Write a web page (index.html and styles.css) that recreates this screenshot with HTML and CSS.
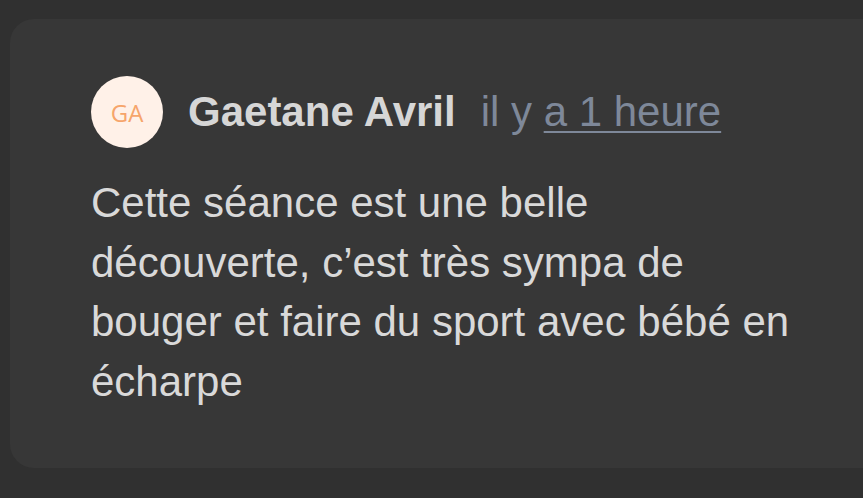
FILE: index.html
```html
<!DOCTYPE html>
<html lang="fr">
<head>
<meta charset="utf-8">
<link rel="stylesheet" href="styles.css">
</head>
<body>
<div class="card">
  <div class="header">
    <div class="avatar">GA</div>
    <span class="name">Gaetane Avril</span>
    <span class="time">il y <a class="link">a 1 heure</a></span>
  </div>
  <p class="text">Cette séance est une belle découverte, c’est très sympa de bouger et faire du sport avec bébé en écharpe</p>
</div>
</body>
</html>
```
FILE: styles.css
```css
html, body { margin: 0; padding: 0; }
body {
  background: #303030;
  width: 863px;
  height: 498px;
  overflow: hidden;
  font-family: "Liberation Sans", Arial, sans-serif;
  padding-top: 19px;
  padding-left: 10px;
  box-sizing: border-box;
}
.card {
  background: #373737;
  border-radius: 24px;
  width: 853px;
  border-top-right-radius: 0;
  border-bottom-right-radius: 0;
  box-sizing: border-box;
  padding: 57px 0 57px 81px;
}
.header {
  display: flex;
  align-items: center;
  height: 72px;
  white-space: nowrap;
}
.avatar {
  width: 72px;
  height: 72px;
  border-radius: 50%;
  background: #fff1e8;
  color: #f6a56b;
  font-family: "Open Sans", sans-serif;
  font-size: 24px;
  display: flex;
  align-items: center;
  justify-content: center;
  margin-right: 25px;
  flex-shrink: 0;
}
.name {
  color: #d6d6d6;
  font-weight: bold;
  font-size: 42px;
  margin-right: 25px;
}
.time {
  color: #7e8899;
  font-size: 42px;
}
.link {
  text-decoration: underline;
  text-decoration-thickness: 2px;
  text-underline-offset: 5px;
}
.text {
  margin: 25px 0 0 0;
  width: 710px;
  color: #d9d9d9;
  font-size: 42px;
  line-height: 59.6px;
}
```
